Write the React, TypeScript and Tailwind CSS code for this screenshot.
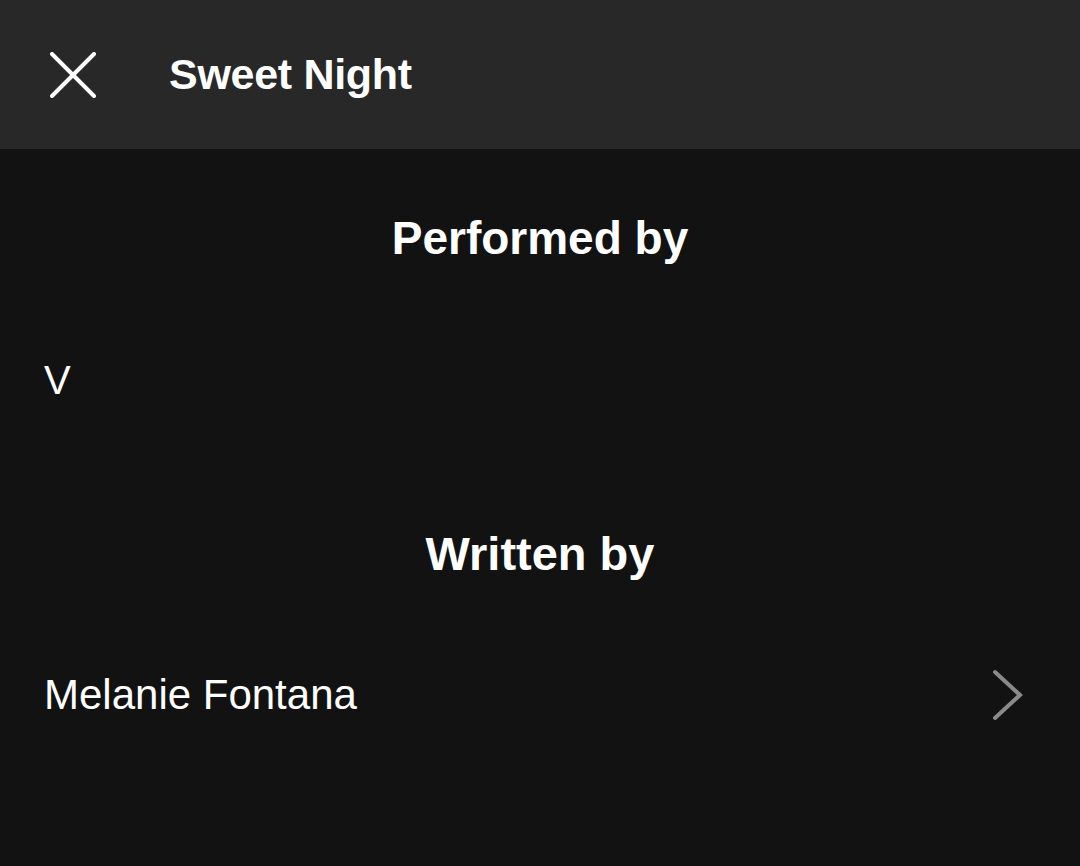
import React from "react";

export default function App() {
  const font = { fontFamily: '"Liberation Sans", Arial, sans-serif' };
  return (
    <div className="w-[1080px] h-[866px] bg-[#121212] text-white flex flex-col" style={font}>
      <div className="h-[149px] bg-[#282828] flex items-center shrink-0">
        <div className="w-[169px] flex items-center pl-[50px]">
          <svg width="46" height="46" viewBox="0 0 46 46" fill="none">
            <path d="M2 2 L44 44 M44 2 L2 44" stroke="white" strokeWidth="4" strokeLinecap="round" />
          </svg>
        </div>
        <div className="text-[43px] font-bold tracking-[-0.3px] leading-none">Sweet Night</div>
      </div>
      <div className="flex flex-col">
        <div className="h-[178px] flex items-center justify-center">
          <div className="text-[46px] font-bold leading-none">Performed by</div>
        </div>
        <div className="h-[106px] flex items-center px-[44px]">
          <div className="text-[40px] leading-none">V</div>
        </div>
        <div className="h-[120px] mt-[60px] flex items-center justify-center">
          <div className="text-[47px] font-bold leading-none">Written by</div>
        </div>
        <div className="h-[164px] flex items-center justify-between pl-[44px] pr-[56px]">
          <div className="text-[42px] leading-none">Melanie Fontana</div>
          <svg width="32" height="52" viewBox="0 0 32 52" fill="none">
            <path d="M3 3 L28 26 L3 49" stroke="#8a8a8a" strokeWidth="4" strokeLinecap="round" strokeLinejoin="miter" />
          </svg>
        </div>
      </div>
    </div>
  );
}
